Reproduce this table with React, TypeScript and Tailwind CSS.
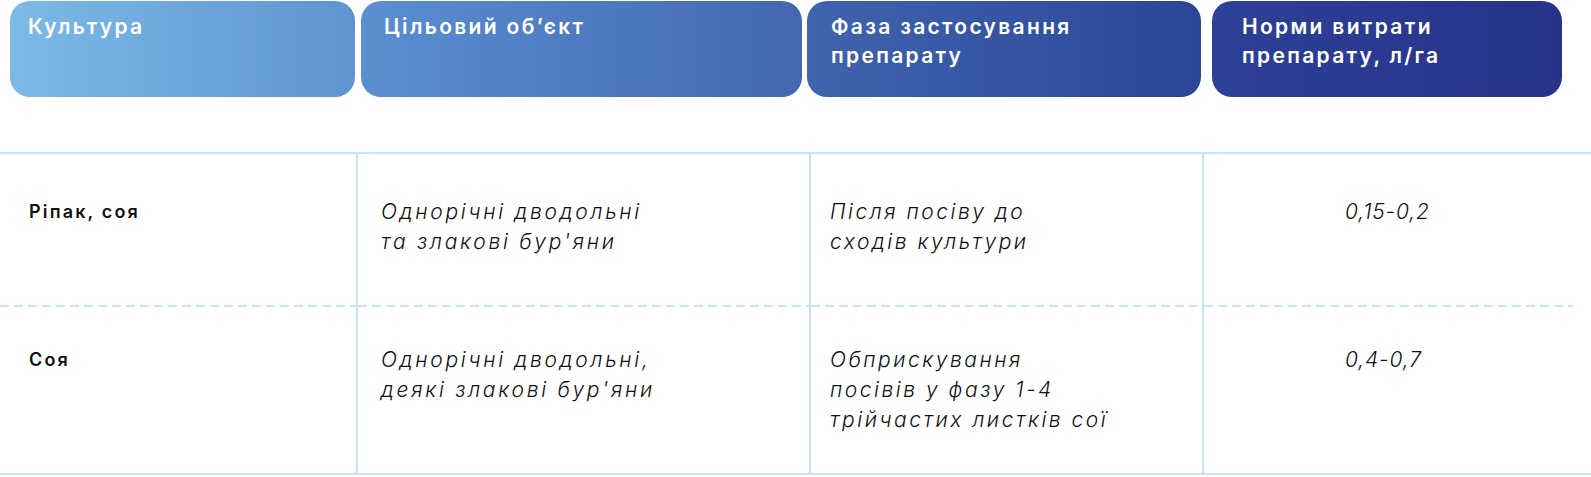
import React from "react";

const headers = [
  {
    title: ["Культура"],
    box: "w-[345px] ml-[10px] pl-[18px] from-[#7bbae7] to-[#5f94d0]",
  },
  {
    title: ["Цільовий об’єкт"],
    box: "w-[441px] ml-[6px] pl-[23px] from-[#5a8fd0] to-[#4468b0]",
  },
  {
    title: ["Фаза застосування", "препарату"],
    box: "w-[394px] ml-[5px] pl-[24px] from-[#4064ae] to-[#2b4697]",
  },
  {
    title: ["Норми витрати", "препарату, л/га"],
    box: "w-[350px] ml-[11px] pl-[30px] from-[#2d4197] to-[#263389]",
  },
];

const rows = [
  {
    crop: "Ріпак, соя",
    target: ["Однорічні дводольні", "та злакові бур'яни"],
    phase: ["Після посіву до", "сходів культури"],
    rate: "0,15-0,2",
    pad: "pt-[43px]",
    height: "h-[153px]",
  },
  {
    crop: "Соя",
    target: ["Однорічні дводольні,", "деякі злакові бур'яни"],
    phase: ["Обприскування", "посівів у фазу 1-4", "трійчастих листків сої"],
    rate: "0,4-0,7",
    pad: "pt-[38px]",
    height: "h-[166px]",
  },
];

function Lines({ lines }: { lines: string[] }) {
  return (
    <>
      {lines.map((l, i) => (
        <div key={i}>{l}</div>
      ))}
    </>
  );
}

const line = "border-[#c5e3f4]";
const dash =
  "bg-[repeating-linear-gradient(to_right,#c8e5f5_0_9px,transparent_9px_14px)] bg-no-repeat bg-bottom-left";

export default function App() {
  return (
    <div className="w-[1591px] h-[477px] bg-white font-['Inter','Noto_Sans',sans-serif] text-[#111]">
      <div className="flex pt-px h-[98px]">
        {headers.map((h, i) => (
          <div
            key={i}
            className={`h-[96px] rounded-[20px] bg-linear-to-r pt-[11px] text-white text-[21px] leading-[29px] font-semibold tracking-[0.11em] ${h.box}`}
          >
            <Lines lines={h.title} />
          </div>
        ))}
      </div>

      <div className={`mt-[54px] border-t-2 border-b-2 ${line}`}>
        {rows.map((r, i) => {
          const first = i === 0;
          return (
            <div
              key={i}
              className={`grid grid-cols-[356px_453px_393px_1fr] ${r.height}`}
            >
              <div
                className={`${r.pad} ${first ? `${dash} bg-[length:100%_2px]` : ""} pl-[29px] text-[18px] leading-[30px] font-semibold tracking-[0.12em]`}
              >
                {r.crop}
              </div>
              <div
                className={`${r.pad} ${first ? `${dash} bg-[length:100%_2px]` : ""} border-l-2 ${line} pl-[23px] text-[21px] leading-[30px] italic font-light tracking-[0.13em]`}
              >
                <Lines lines={r.target} />
              </div>
              <div
                className={`${r.pad} ${first ? `${dash} bg-[length:100%_2px]` : ""} border-l-2 ${line} pl-[19px] text-[21px] leading-[30px] italic font-light tracking-[0.12em]`}
              >
                <Lines lines={r.phase} />
              </div>
              <div
                className={`${r.pad} ${first ? `${dash} bg-[length:calc(100%-18px)_2px]` : ""} border-l-2 ${line} pl-[141px] text-[21px] leading-[30px] italic font-light tracking-[0.04em]`}
              >
                {r.rate}
              </div>
            </div>
          );
        })}
      </div>
    </div>
  );
}
